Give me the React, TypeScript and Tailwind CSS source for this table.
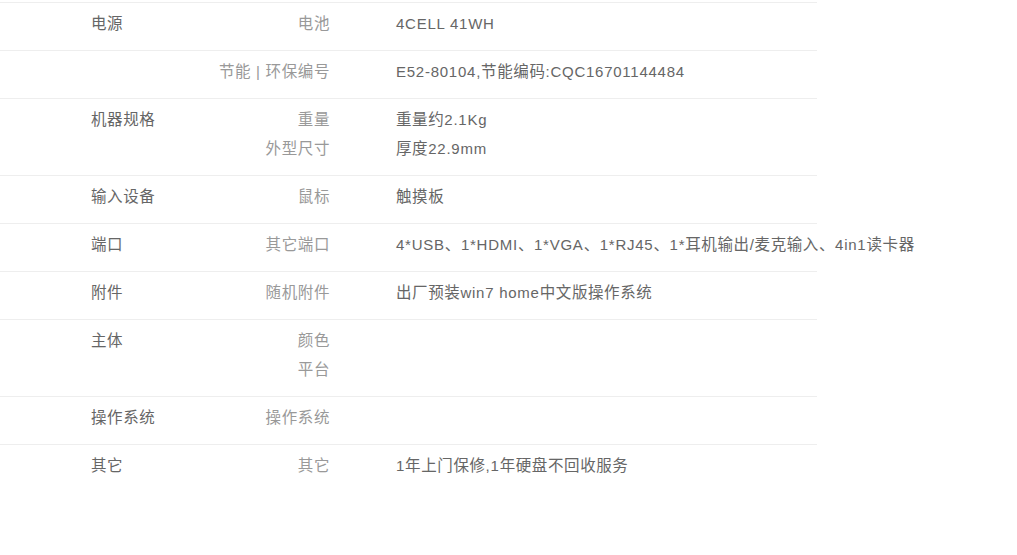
import React from "react";

type Row = { group: string; items: { k: string; v: string }[] };

const rows: Row[] = [
  { group: "电源", items: [{ k: "电池", v: "4CELL 41WH" }] },
  { group: "", items: [{ k: "节能 | 环保编号", v: "E52-80104,节能编码:CQC16701144484" }] },
  {
    group: "机器规格",
    items: [
      { k: "重量", v: "重量约2.1Kg" },
      { k: "外型尺寸", v: "厚度22.9mm" },
    ],
  },
  { group: "输入设备", items: [{ k: "鼠标", v: "触摸板" }] },
  {
    group: "端口",
    items: [{ k: "其它端口", v: "4*USB、1*HDMI、1*VGA、1*RJ45、1*耳机输出/麦克输入、4in1读卡器" }],
  },
  { group: "附件", items: [{ k: "随机附件", v: "出厂预装win7 home中文版操作系统" }] },
  {
    group: "主体",
    items: [
      { k: "颜色", v: "" },
      { k: "平台", v: "" },
    ],
  },
  { group: "操作系统", items: [{ k: "操作系统", v: "" }] },
  { group: "其它", items: [{ k: "其它", v: "1年上门保修,1年硬盘不回收服务" }] },
];

const CJK = /[\u3000-\u30ff\u4e00-\u9fff\uff00-\uffef]/;

function T({ text }: { text: string }) {
  const parts = text.match(/[\u3000-\u30ff\u4e00-\u9fff\uff00-\uffef]+|[^\u3000-\u30ff\u4e00-\u9fff\uff00-\uffef]+/g) || [];
  return (
    <>
      {parts.map((p, i) =>
        CJK.test(p) ? (
          <span key={i} className="text-[15.5px] tracking-[0.6px]">
            {p}
          </span>
        ) : (
          <span key={i}>{p}</span>
        )
      )}
    </>
  );
}

export default function App() {
  return (
    <div
      className="w-[1017px] h-[555px] bg-white overflow-hidden pt-[2px]"
      style={{ fontFamily: '"Liberation Sans", "Noto Sans CJK SC", sans-serif' }}
    >
      <div className="w-[817px]">
        {rows.map((r, i) => (
          <div key={i} className="flex border-t border-[#eeeeee] pt-[6px] pb-[12px] text-[15px] tracking-[0.75px]">
            <div className="w-[91px] shrink-0" />
            <div className="w-[100px] shrink-0 leading-[29px] text-[#666666] whitespace-nowrap">
              <T text={r.group} />
            </div>
            <div className="w-[138px] shrink-0 flex flex-col items-end text-[#999999]">
              {r.items.map((it, j) => (
                <div key={j} className="h-[29px] leading-[29px] whitespace-nowrap -mr-[1px]">
                  <T text={it.k} />
                </div>
              ))}
            </div>
            <div className="ml-[67px] flex flex-col text-[#666666]">
              {r.items.map((it, j) => (
                <div key={j} className="h-[29px] leading-[29px] whitespace-nowrap">
                  <T text={it.v} />
                </div>
              ))}
            </div>
          </div>
        ))}
      </div>
    </div>
  );
}
